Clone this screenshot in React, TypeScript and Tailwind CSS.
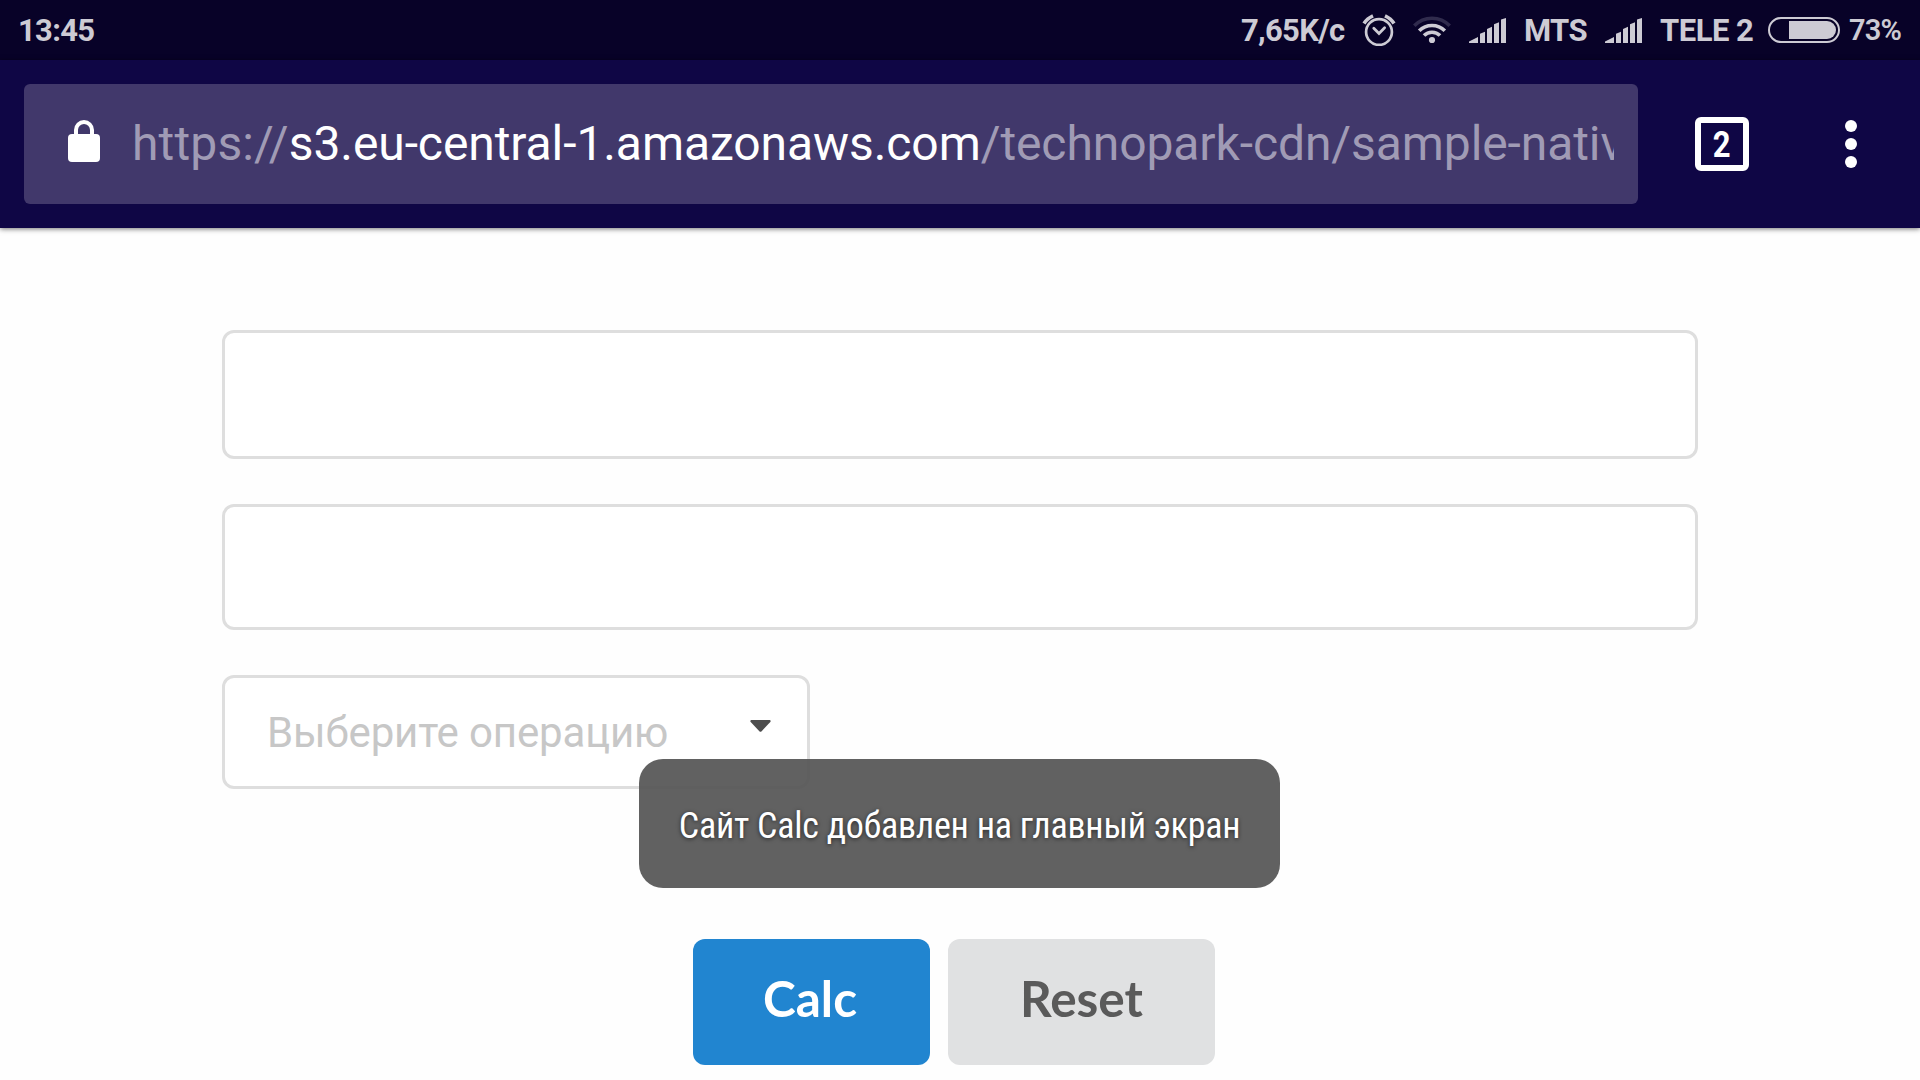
function Signal({ className }: { className: string }) {
  return (
    <svg className={`h-[25px] w-[37px] shrink-0 ${className}`} viewBox="0 0 37 25" fill="currentColor">
      <path d="M0 25V23.6L9 19V25ZM11 25V15.7L16 13.8V25ZM18 25V11L23 8.8V25ZM25 25V6.3L30 4.3V25ZM32 25V1.5L37 0V25Z" />
    </svg>
  );
}

function StatusBar() {
  return (
    <header className="flex h-[60px] items-center bg-[#080228] pl-[18px] text-[31px] font-bold tracking-[-0.7px] whitespace-nowrap text-[#cdcbd4]">
      <span className="w-[1223px] pt-[3px]">13:45</span>
      <span className="w-[121px] pt-[3px]">7,65K/c</span>
      <svg className="h-[32px] w-[34px] shrink-0" viewBox="0 0 34 32" fill="none" stroke="currentColor">
        <circle cx="17" cy="18" r="12.9" strokeWidth="2.7" />
        <path d="M11.8 14.2 17 19.4 22.6 13.8" strokeWidth="2.8" strokeLinecap="round" />
        <path d="M2 9.5Q5 4.5 11 1.8M32 9.5Q29 4.5 23 1.8" strokeWidth="3.6" />
      </svg>
      <svg className="ml-[17px] h-[28px] w-[38px] shrink-0" viewBox="0 0 38 28" fill="none" stroke="currentColor" strokeWidth="3.6">
        <path d="M1.3 9.8A24.5 24.5 0 0 1 36.7 9.8" stroke="#302b4d" />
        <path d="M6.2 14.8A18 18 0 0 1 31.8 14.8" />
        <path d="M11 19.6A11.2 11.2 0 0 1 27 19.6" />
        <circle cx="19" cy="24" r="3.1" fill="currentColor" stroke="none" />
      </svg>
      <Signal className="mt-[1px] ml-[18px]" />
      <span className="ml-[18px] w-[81px] pt-[3px] tracking-[-0.6px]">MTS</span>
      <Signal className="mt-[1px] ml-0" />
      <span className="ml-[18px] w-[108px] pt-[3px] tracking-[-0.5px]">TELE 2</span>
      <svg className="h-[26px] w-[72px] shrink-0" viewBox="0 0 72 26">
        <rect x="1" y="1" width="70" height="24" rx="12" fill="none" stroke="currentColor" strokeWidth="2" />
        <path d="M21 4H59A9 9 0 0 1 59 22H21Z" fill="currentColor" />
      </svg>
      <span className="ml-[9px] pt-[2px] text-[29px] font-semibold tracking-[-0.8px]">73%</span>
    </header>
  );
}

function Toolbar() {
  return (
    <div className="relative flex h-[168px] items-center bg-[#0f0645] pl-[24px] shadow-[0_1px_5px_rgba(0,0,0,0.55)]">
      <div className="flex h-[120px] w-[1614px] items-center rounded-[6px] bg-[#41386b] pl-[44px]">
        <svg className="mt-[-6px] h-[42px] w-[32px] shrink-0" viewBox="0 0 32 42" fill="none">
          <rect y="14" width="32" height="28" rx="4" fill="white" />
          <path d="M8 15V10A8 8 0 0 1 24 10V15" stroke="white" strokeWidth="4" />
        </svg>
        <div className="ml-[32px] w-[1482px] overflow-hidden text-[48px] leading-[60px] whitespace-nowrap text-[#a09bb5]">
          <span className="tracking-[0.15px]">https://</span>
          <span className="tracking-[-0.08px] text-white">s3.eu-central-1.amazonaws.com</span>
          <span className="tracking-[-0.09px]">/technopark-cdn/sample-native</span>
        </div>
      </div>
      <div className="ml-[57px] flex size-[54px] items-center justify-center rounded-[6px] border-[6px] border-white text-[37px] leading-none font-bold text-white">
        <span className="scale-x-[0.84]">2</span>
      </div>
      <div className="ml-[96px] flex flex-col gap-[6px]">
        <i className="size-[12px] rounded-full bg-white" />
        <i className="size-[12px] rounded-full bg-white" />
        <i className="size-[12px] rounded-full bg-white" />
      </div>
    </div>
  );
}

export default function App() {
  return (
    <div className="relative h-[1080px] w-[1920px] overflow-hidden bg-[#fefefe] font-[Roboto,sans-serif]">
      <StatusBar />
      <Toolbar />
      <main className="flex flex-col px-[222px] pt-[102px]">
        <input className="h-[129px] rounded-[12px] border-[3px] border-[#dedede] bg-white outline-none" />
        <input className="mt-[45px] h-[126px] rounded-[12px] border-[3px] border-[#dedede] bg-white outline-none" />
        <div className="mt-[45px] flex h-[114px] w-[588px] items-start justify-between rounded-[12px] border-[3px] border-[#dedede] bg-white pr-[36px] pl-[42px]">
          <span className="mt-[28px] text-[42px] leading-[54px] tracking-[-0.15px] whitespace-nowrap text-[#c7c7c7]">Выберите операцию</span>
          <svg className="mt-[42px] h-[12px] w-[21px]" viewBox="0 0 21 12">
            <path d="M1.2 0H19.8Q21.3 .8 20.3 2L11.6 11.3Q10.5 12.3 9.4 11.3L.7 2Q-.3 .8 1.2 0Z" fill="#4d4d4d" />
          </svg>
        </div>
        <div className="mt-[150px] flex gap-[18px] pl-[471px] text-[49.5px] leading-[119px] font-bold">
          <button className="flex h-[126px] w-[237px] justify-center rounded-[12px] bg-[#2185d0] pr-[3px] font-[Lato,sans-serif] text-white">Calc</button>
          <button className="flex h-[126px] w-[267px] justify-center rounded-[12px] bg-[#e0e1e2] font-[Lato,sans-serif] text-[#5a5a5a]">Reset</button>
        </div>
      </main>
      <div className="absolute top-[759px] left-[639px] flex h-[129px] w-[641px] items-center justify-center rounded-[24px] bg-[#555555]/93">
        <span className="mt-[4px] font-['Roboto_Condensed',Roboto,sans-serif] text-[36px] leading-[48px] tracking-[-0.23px] whitespace-nowrap text-white [font-stretch:condensed] [text-shadow:0_1px_4px_rgba(0,0,0,0.6)]">
          Сайт Calc добавлен на главный экран
        </span>
      </div>
    </div>
  );
}
